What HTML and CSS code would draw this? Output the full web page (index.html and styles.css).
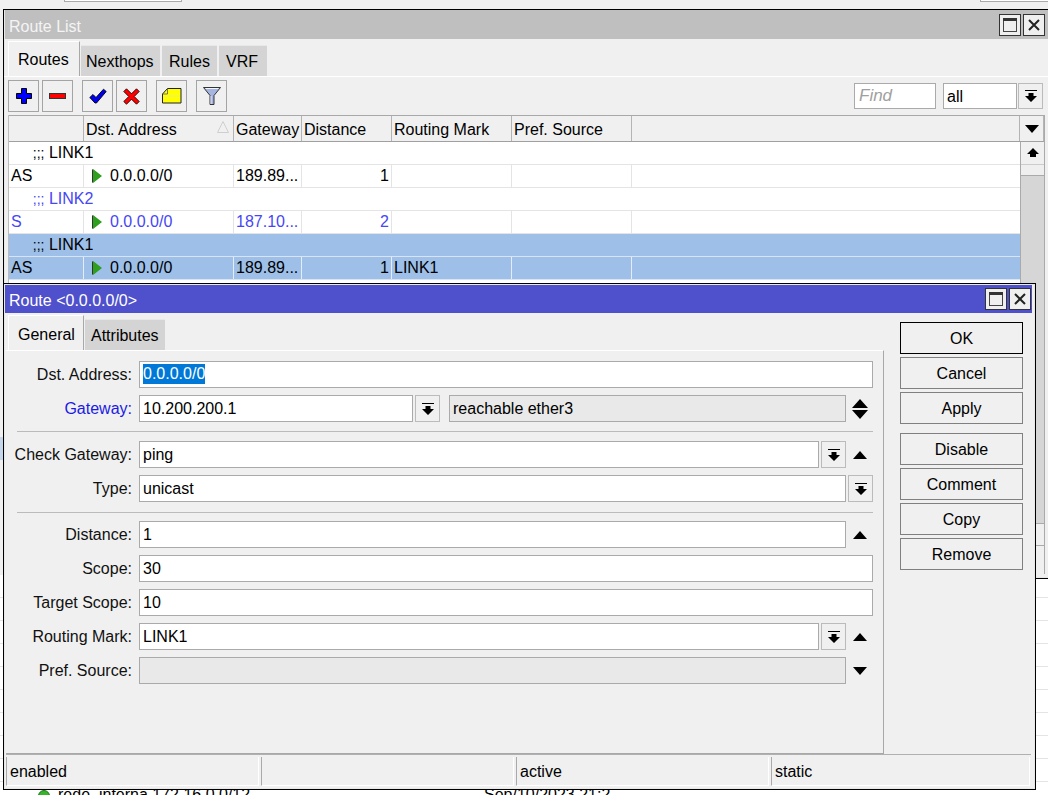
FILE: index.html
```html
<!DOCTYPE html>
<html lang="en">
<head>
<meta charset="utf-8">
<title>Route List</title>
<link rel="stylesheet" href="styles.css">
</head>
<body>
<div class="desk">
  <div class="back-top"><div class="back-box"></div><div class="back-box back-box-r"></div></div>
  <div class="back-sel"></div>
  <div class="back-list">
    <div class="back-row"></div><div class="back-row"></div><div class="back-row"></div><div class="back-row"></div>
    <div class="back-row"></div><div class="back-row"></div><div class="back-row"></div><div class="back-row"></div><div class="back-row"></div>
    <div class="back-row back-last">
      <span class="dot"></span><span class="back-name">rede_interna 172.16.0.0/12</span><span class="back-date">Sep/10/2023 21:2</span>
    </div>
  </div>

  <section class="win list-win">
    <header class="title title-idle">
      <span class="title-text">Route List</span>
      <span class="win-btn"><svg width="18" height="18" viewBox="0 0 18 18"><rect x="2.5" y="2.5" width="13" height="13" fill="#efefef" stroke="#444"/><rect x="2" y="2" width="14" height="3" fill="#333"/></svg></span>
      <span class="win-btn"><svg width="18" height="18" viewBox="0 0 18 18"><path d="M4 4l10 10M14 4L4 14" stroke="#222" stroke-width="2"/></svg></span>
    </header>
    <nav class="tabs list-tabs">
      <span class="tab tab-on">Routes</span><span class="tab">Nexthops</span><span class="tab">Rules</span><span class="tab">VRF</span>
    </nav>
    <div class="toolbar">
      <button class="tool"><svg width="16" height="16" viewBox="0 0 16 16"><path d="M5.500 .5h5v5h5v5h-5v5h-5v-5h-5v-5h5z" fill="#0000ff" stroke="#000"/></svg></button>
      <button class="tool"><svg width="17" height="8" viewBox="0 0 17 8"><rect x=".5" y="1.500" width="16" height="5" fill="#ff0000" stroke="#333"/></svg></button>
      <button class="tool tool-gap"><svg width="18" height="16" viewBox="0 0 18 16"><path d="M.8 9.500L4 6.500l3 3L14.500 1.200 17.200 3.500 7.500 15h-1.500z" fill="#0000f0" stroke="#000" stroke-width=".9"/></svg></button>
      <button class="tool"><svg width="17" height="17" viewBox="0 0 17 17"><path d="M.8 3.500L3.500.8l5 5 5-5 2.700 2.700-5 5 5 5-2.700 2.700-5-5-5 5L.8 13.500l5-5z" fill="#ff0000" stroke="#200" stroke-width=".9"/></svg></button>
      <button class="tool tool-gap"><svg width="20" height="16" viewBox="0 0 20 16"><path d="M.5 6L5.500.5h13.500v14.500H.5z" fill="#ffff00" stroke="#222"/><path d="M.5 6h5V.5" fill="none" stroke="#555" stroke-width=".8"/><path d="M3 8h14" stroke="#e8e8a0" stroke-dasharray="4 1"/></svg></button>
      <button class="tool tool-gap"><svg width="20" height="20" viewBox="0 0 20 20"><path d="M1.500 1.500h17L12 9.500v9H8v-9z" fill="#a6b4e0" stroke="#333"/><path d="M3.500 2.500h13" stroke="#f4f6ff"/><path d="M9 10v8" stroke="#e4e8fa"/></svg></button>
      <span class="tool-fill"></span>
      <input class="find" placeholder="Find" aria-label="Find">
      <span class="all">all</span>
      <button class="dd dd-top"><svg width="14" height="14" viewBox="0 0 14 14"><path d="M1 1.500h12" stroke="#000"/><path d="M4.500 4h5v3H13l-6 6-6-6h3.500z" fill="#000"/></svg></button>
    </div>
    <div class="table-wrap">
      <div class="table">
        <div class="tr thead">
          <span class="c c0"></span><span class="c c1">Dst. Address<svg class="sort" width="12" height="12" viewBox="0 0 12 12"><path d="M6 .5L.5 11.500h11z" fill="none" stroke="#cfcfcf"/></svg></span><span class="c c2">Gateway</span><span class="c c3 left">Distance</span><span class="c c4">Routing Mark</span><span class="c c5">Pref. Source</span><span class="c c6"></span>
          <span class="c c7"><svg width="16" height="10" viewBox="0 0 16 10"><path d="M1 1h14L8 9z" fill="#000"/></svg></span>
        </div>
        <div class="tbody">
          <div class="rows">
            <div class="tr note">&nbsp;&nbsp;&nbsp;&nbsp;<span class="semi">;;;</span> LINK1</div>
            <div class="tr"><span class="c c0">AS</span><span class="c c1"><i class="play"></i>0.0.0.0/0</span><span class="c c2">189.89...</span><span class="c c3">1</span><span class="c c4"></span><span class="c c5"></span><span class="c c6"></span></div>
            <div class="tr note blue">&nbsp;&nbsp;&nbsp;&nbsp;<span class="semi">;;;</span> LINK2</div>
            <div class="tr blue"><span class="c c0">S</span><span class="c c1"><i class="play"></i>0.0.0.0/0</span><span class="c c2">187.10...</span><span class="c c3">2</span><span class="c c4"></span><span class="c c5"></span><span class="c c6"></span></div>
            <div class="tr note sel">&nbsp;&nbsp;&nbsp;&nbsp;<span class="semi">;;;</span> LINK1</div>
            <div class="tr sel"><span class="c c0">AS</span><span class="c c1"><i class="play"></i>0.0.0.0/0</span><span class="c c2">189.89...</span><span class="c c3">1</span><span class="c c4">LINK1</span><span class="c c5"></span><span class="c c6"></span></div>
          </div>
          <div class="scroll">
            <span class="sc-btn"><svg width="12" height="10" viewBox="0 0 12 10"><path d="M6 0l6 6H9v3H3V6H0z" fill="#000"/></svg></span>
            <span class="sc-thumb"></span>
            <span class="sc-track"></span>
            <span class="sc-btn sc-down"></span>
            <span class="sc-corner"></span>
          </div>
        </div>
      </div>
    </div>
  </section>

  <section class="win dlg">
    <header class="title title-active">
      <span class="title-text">Route &lt;0.0.0.0/0&gt;</span>
      <span class="win-btn"><svg width="18" height="18" viewBox="0 0 18 18"><rect x="2.500" y="2.500" width="13" height="13" fill="#efefef" stroke="#444"/><rect x="2" y="2" width="14" height="3" fill="#333"/></svg></span>
      <span class="win-btn"><svg width="18" height="18" viewBox="0 0 18 18"><path d="M4 4l10 10M14 4L4 14" stroke="#222" stroke-width="2"/></svg></span>
    </header>
    <div class="dlg-main">
      <div class="dlg-left">
        <nav class="tabs dlg-tabs"><span class="tab tab-on">General</span><span class="tab">Attributes</span></nav>
        <form class="panel">
          <div class="row"><label>Dst. Address:</label><span class="fld"><span class="hl">0.0.0.0/0</span></span></div>
          <div class="row"><label class="lbl-blue">Gateway:</label><span class="fld gw">10.200.200.1</span>
            <span class="dd"><svg width="14" height="14" viewBox="0 0 14 14"><path d="M1 1.500h12" stroke="#000"/><path d="M4.500 4h5v3H13l-6 6-6-6h3.500z" fill="#000"/></svg></span>
            <span class="fld ro gw-state">reachable ether3</span>
            <span class="tri"><svg width="16" height="20" viewBox="0 0 16 20"><path d="M8 0l8 9H0zM0 11h16l-8 9z" fill="#000"/></svg></span></div>
          <hr class="rule">
          <div class="row"><label>Check Gateway:</label><span class="fld">ping</span>
            <span class="dd"><svg width="14" height="14" viewBox="0 0 14 14"><path d="M1 1.500h12" stroke="#000"/><path d="M4.500 4h5v3H13l-6 6-6-6h3.500z" fill="#000"/></svg></span>
            <span class="tri"><svg width="14" height="8" viewBox="0 0 14 8"><path d="M7 0l7 8H0z" fill="#000"/></svg></span></div>
          <div class="row"><label>Type:</label><span class="fld">unicast</span>
            <span class="dd"><svg width="14" height="14" viewBox="0 0 14 14"><path d="M1 1.500h12" stroke="#000"/><path d="M4.500 4h5v3H13l-6 6-6-6h3.500z" fill="#000"/></svg></span></div>
          <hr class="rule rule2">
          <div class="row"><label>Distance:</label><span class="fld">1</span>
            <span class="tri"><svg width="14" height="8" viewBox="0 0 14 8"><path d="M7 0l7 8H0z" fill="#000"/></svg></span></div>
          <div class="row"><label>Scope:</label><span class="fld">30</span></div>
          <div class="row"><label>Target Scope:</label><span class="fld">10</span></div>
          <div class="row"><label>Routing Mark:</label><span class="fld">LINK1</span>
            <span class="dd"><svg width="14" height="14" viewBox="0 0 14 14"><path d="M1 1.500h12" stroke="#000"/><path d="M4.500 4h5v3H13l-6 6-6-6h3.500z" fill="#000"/></svg></span>
            <span class="tri"><svg width="14" height="8" viewBox="0 0 14 8"><path d="M7 0l7 8H0z" fill="#000"/></svg></span></div>
          <div class="row"><label>Pref. Source:</label><span class="fld ro"></span>
            <span class="tri"><svg width="14" height="8" viewBox="0 0 14 8"><path d="M0 0h14L7 8z" fill="#000"/></svg></span></div>
        </form>
      </div>
      <div class="actions">
        <button class="act act-def">OK</button>
        <button class="act">Cancel</button>
        <button class="act">Apply</button>
        <button class="act act-gap">Disable</button>
        <button class="act">Comment</button>
        <button class="act">Copy</button>
        <button class="act">Remove</button>
      </div>
    </div>
    <footer class="status">
      <span class="st">enabled</span><span class="st"></span><span class="st">active</span><span class="st">static</span>
    </footer>
  </section>
</div>
</body>
</html>
```

FILE: styles.css
```css
* { box-sizing: border-box; }
html, body { margin: 0; padding: 0; height: 100%; overflow: hidden; }
body { background: #f0f0f0; font: 16px/1 "Liberation Sans", Arial, sans-serif; color: #000; }
.desk { position: relative; width: 1048px; height: 795px; overflow: hidden; }

.back-top { height: 9px; position: relative; }
.back-box { position: absolute; left: 64px; top: -6px; width: 118px; height: 8px; background: #fff; border: 1px solid #aaa; }
.back-box-r { left: 980px; width: 80px; }
.back-sel { position: absolute; left: 0; top: 437px; width: 3px; height: 23px; background: #c5d5ea; }
.back-list { position: absolute; left: 0; top: 575px; width: 1048px; height: 220px; background: #fff; }
.back-row { height: 23px; border-bottom: 1px solid #e4e4e4; position: relative; }
.dot { position: absolute; left: 38px; top: 8px; width: 12px; height: 12px; border-radius: 50%; background: #35b52a; border: 1px solid #1c7a16; }
.back-name { position: absolute; left: 58px; top: 5px; }
.back-date { position: absolute; left: 484px; top: 5px; }

.win { position: absolute; border: 1px solid #000; background: #f0f0f0; box-shadow: inset 0 0 0 1px #e8e8e8; }
.list-win { left: 3px; top: 9px; width: 1060px; height: 570px; }
.dlg { left: 3px; top: 283px; width: 1033px; height: 507px; display: flex; flex-direction: column; }

.title { display: flex; align-items: center; color: #fff; margin: 0 0 0 1px; }
.title-idle { background: #bfbfbf; height: 29px; padding-right: 17px; }
.title-active { background: #4f50cb; height: 28px; margin-top: 1px; margin-right: 3px; padding-right: 1px; }
.title-text { flex: 1; padding: 4px 0 0 4px; color: #fff; }
.title-idle .title-text { color: #f4f4f4; }
.win-btn { width: 22px; height: 22px; margin-left: 2px; background: #efefef; border: 1px solid #333; display: flex; align-items: center; justify-content: center; }

.tabs { display: flex; align-items: flex-end; }
.tab { height: 31px; padding: 2px 5px 0; margin-left: 1px; display: flex; align-items: center; background: #d4d4d4; border-top: 1px solid #e8e8e8; }
.tab-on { height: 35px; margin-left: 0; padding: 2px 9px 0; background: #f0f0f0; border: 1px solid #fff; border-right: 1px solid #a8a8a8; border-bottom: 0; }
.list-tabs { height: 37px; padding: 0 0 0 4px; }
.list-tabs .tab-on { width: 72px; }
.list-tabs .tab:nth-child(2) { width: 79px; }
.list-tabs .tab:nth-child(3) { width: 55px; margin-left: 2px; padding: 2px 7px 0; }
.list-tabs .tab:nth-child(4) { width: 48px; margin-left: 2px; padding: 2px 7px 0; }

.toolbar { display: flex; align-items: center; height: 39px; padding: 0 0 0 4px; border-top: 1px solid #fff; }
.tool { width: 31px; height: 32px; margin-right: 3px; padding: 0; background: #f0f0f0; border: 1px solid #a4a4a4; display: flex; align-items: center; justify-content: center; }
.tool-gap { margin-left: 6px; }
.tool-fill { flex: 1; }
.find { width: 82px; height: 26px; margin-right: 7px; border: 1px solid #aaa; background: #fff; padding: 0 4px; font: italic 17px "Liberation Sans", Arial, sans-serif; }
.find::placeholder { color: #a0a0a0; opacity: 1; }
.all { width: 74px; height: 26px; margin-right: 1px; border: 1px solid #aaa; background: #fff; padding: 5px 3px; }
.dd { width: 25px; height: 26px; flex: none; padding: 0; background: #f0f0f0; border: 1px solid #bbb; display: flex; align-items: center; justify-content: center; }
.dd-top { margin-right: 19px; }

.table-wrap { padding: 0 0 0 4px; }
.table { width: 1037px; border-left: 1px solid #bbb; border-right: 1px solid #aaa; }
.tr { display: flex; height: 23px; background: #fff; border-bottom: 1px solid #e4e4e4; line-height: 22px; }
.thead { height: 27px; background: #f0f0f0; border-top: 1px solid #a8a8a8; border-bottom: 1px solid #a0a0a0; line-height: 27px; }
.c { display: block; padding: 0 2px; border-right: 1px solid #e4e4e4; position: relative; white-space: nowrap; overflow: hidden; flex: none; }
.thead .c { border-right: 1px solid #b4b4b4; }
.c0 { width: 75px; }
.c1 { width: 150px; }
.c2 { width: 68px; }
.c3 { width: 90px; text-align: right; }
.c3.left { text-align: left; }
.c4 { width: 120px; }
.c5 { width: 120px; }
.c6 { flex: 1; border-right: 0; }
.thead .c6 { flex: none; width: 388px; }
.c7 { width: 24px; display: flex; align-items: center; justify-content: center; padding: 0; }
.sort { position: absolute; right: 4px; top: 5px; }
.tbody { display: flex; height: 432px; }
.rows { width: 1011px; flex: none; background: #fff; }
.note { display: block; padding-left: 6px; }
.semi { font-size: 14px; }
.blue { color: #4646f5; }
.sel { background: #9dbfe8; border-bottom-color: #d8e4f4; }
.sel .c { border-right-color: #e4ecf8; }
.play { display: inline-block; width: 0; height: 0; margin: 0 8px 0 7px; border-left: 9px solid #2fa01e; border-top: 7px solid transparent; border-bottom: 7px solid transparent; vertical-align: -2px; filter: drop-shadow(-1px 0 0 #333); }
.scroll { width: 24px; flex: none; background: #d6d6d6; border-left: 1px solid #aaa; display: flex; flex-direction: column; }
.sc-btn { height: 23px; flex: none; background: #f0f0f0; display: flex; align-items: center; justify-content: center; border-bottom: 1px solid #ccc; }
.sc-thumb { height: 11px; flex: none; background: #efefef; border-bottom: 1px solid #aaa; }
.sc-track { flex: 1; }
.sc-down { border-top: 1px solid #aaa; border-bottom: 1px solid #aaa; }
.sc-corner { height: 28px; flex: none; background: #f0f0f0; }

.dlg-main { display: flex; height: 441px; flex: none; }
.dlg-left { width: 880px; flex: none; padding-left: 2px; }
.dlg-tabs { height: 37px; padding: 0 0 0 2px; }
.dlg-tabs .tab { padding: 2px 6px 0; }
.dlg-tabs .tab-on { width: 76px; padding: 3px 9px 0; }
.panel { height: 404px; border-top: 1px solid #fff; border-right: 1px solid #a8a8a8; border-bottom: 1px solid #a8a8a8; padding: 10px 10px 0 0; display: flex; flex-direction: column; gap: 7px; }
.row { display: flex; height: 27px; flex: none; align-items: stretch; }
.row label { width: 126px; flex: none; margin-right: 7px; text-align: right; line-height: 27px; color: #111; white-space: nowrap; }
.row .lbl-blue { color: #1a1ae6; }
.fld { flex: 1; min-width: 0; background: #fff; border: 1px solid #aaa; line-height: 25px; padding: 0 3px; white-space: nowrap; }
.ro { background: #e9e9e9; }
.gw { flex: none; width: 274px; }
.gw-state { margin-left: 9px; }
.row .dd { margin-left: 2px; height: 27px; }
.tri { flex: none; width: 27px; display: flex; align-items: center; justify-content: center; }
.hl { display: inline-block; background: #0078d7; color: #fff; height: 20px; line-height: 20px; vertical-align: top; margin-top: 2px; }
.rule { margin: 2px 0 2px 11px; border: 0; border-top: 1px solid #bbb; height: 1px; flex: none; }
.rule2 { margin: 3px 0 1px 11px; }

.actions { display: flex; flex-direction: column; gap: 3px; padding: 9px 0 0 16px; width: 139px; flex: none; }
.act { height: 32px; flex: none; padding: 2px 0 0; background: #f0f0f0; border: 1px solid #808080; font: 16px "Liberation Sans", Arial, sans-serif; color: #000; }
.act-def { border-color: #000; }
.act-gap { margin-top: 6px; }

.status { display: flex; gap: 2px; margin: 0 4px 0 2px; padding: 2px 0 0; border-top: 1px solid #b0b0b0; }
.st { width: 253px; height: 29px; line-height: 29px; padding-left: 3px; border-left: 1px solid #aaa; border-bottom: 1px solid #fff; border-right: 1px solid #fff; }
.st:last-child { width: 259px; }
```
